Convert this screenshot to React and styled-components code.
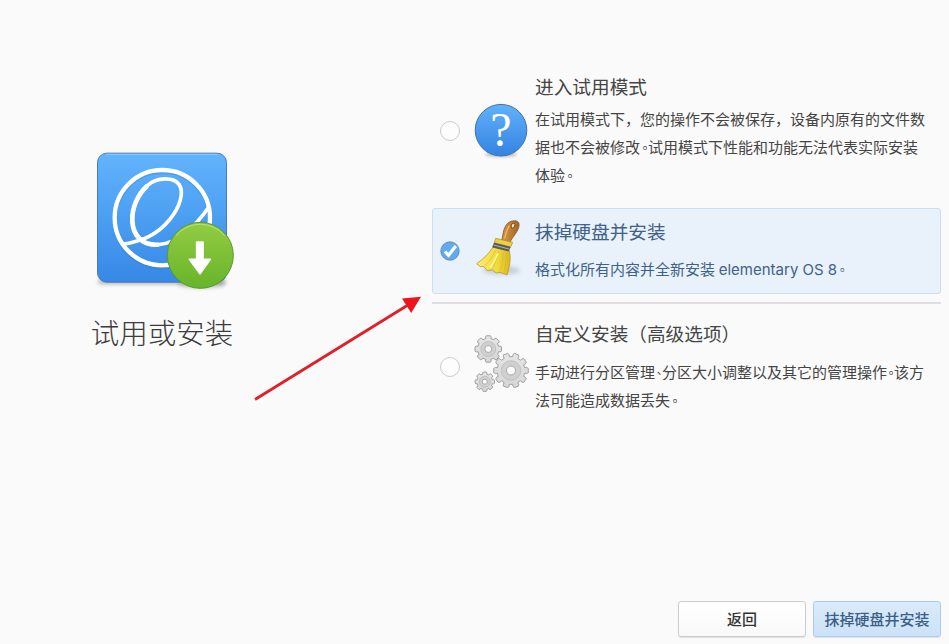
import React from "react";
import styled, { createGlobalStyle } from "styled-components";

const GlobalStyle = createGlobalStyle`
  * {
    box-sizing: border-box;
  }
  body {
    margin: 0;
    background: #fafafa;
    color: #454545;
    font-family: Inter, "Noto Sans CJK SC", sans-serif;
  }
`;

const Window = styled.div`
  position: relative;
  display: flex;
  flex-direction: column;
  width: 949px;
  height: 644px;
  overflow: hidden;
  background: #fafafa;
`;
const Content = styled.main`
  display: flex;
  flex: 1;
`;
const Intro = styled.section`
  display: flex;
  flex-direction: column;
  align-items: center;
  width: 324px;
  margin-right: 108px;
  padding-top: 140px;
`;
const Logo = styled.svg`
  width: 160px;
  height: 160px;
  margin-left: 6px;
`;
const Heading = styled.h1`
  margin: 12px 0 0;
  font-size: 28.5px;
  line-height: 44px;
  font-weight: 300;
  color: #3c3c3c;
`;
const Options = styled.section`
  display: flex;
  flex-direction: column;
  width: 509px;
  padding-top: 73px;
`;
const Option = styled.div`
  display: flex;
  align-items: center;
  height: ${({ $height }) => $height}px;
  margin-bottom: ${({ $gap }) => $gap || 0}px;
  padding-left: ${({ $selected }) => ($selected ? 7 : 8)}px;
  border: ${({ $selected }) => ($selected ? "1px solid #c9e0f5" : "none")};
  border-radius: 3px;
  background: ${({ $selected }) => ($selected ? "#e9f1fb" : "transparent")};
  color: ${({ $selected }) => ($selected ? "#3f6288" : "#454545")};
`;
const Radio = styled.span`
  flex: none;
  width: 20px;
  height: 20px;
  margin: 0 13px 2px 0;
  border: 1.5px solid #cbcbcb;
  border-radius: 50%;
  background: #fdfdfd;
`;
const Check = styled.svg`
  flex: none;
  width: 20px;
  height: 20px;
  margin-right: 13px;
`;
const Icon = styled.svg`
  flex: none;
  width: 56px;
  height: ${({ $height }) => $height}px;
  margin-right: 6px;
  overflow: visible;
`;
const Title = styled.h2`
  margin: 0 0 ${({ $gap }) => $gap}px;
  font-size: 18.67px;
  line-height: 28px;
  font-weight: 400;
`;
const Line = styled.p`
  margin: 0;
  font-size: 15px;
  line-height: 28px;
  white-space: nowrap;
`;
const Stop = styled.span`
  display: inline-block;
  width: ${({ $width }) => $width || 8}px;
  padding-left: ${({ $width }) => ($width === 7 ? 1 : 2)}px;
  font-family: "Noto Sans CJK TC", sans-serif;
  font-feature-settings: "halt";
  font-size: 12px;
  line-height: 1;
`;
const Latin = styled.span`
  margin-left: -0.5px;
`;
const Separator = styled.hr`
  width: 100%;
  height: 2px;
  margin: 0 0 17px;
  border: 0;
  background: #dedede;
`;
const Actions = styled.footer`
  display: flex;
  justify-content: flex-end;
  gap: 7px;
  padding: 0 8px 7px 0;
`;
const Button = styled.button`
  width: 128px;
  height: 36px;
  padding: 0 0 2px;
  border: 1px solid ${({ $primary }) => ($primary ? "#a9cdec" : "#cccccc")};
  border-radius: 3px;
  background: ${({ $primary }) =>
    $primary
      ? "linear-gradient(#d9eafb, #cde2f8)"
      : "linear-gradient(#ffffff, #f9f9f9)"};
  box-shadow: 0 1px 1px rgba(0, 0, 0, 0.1);
  color: ${({ $primary }) => ($primary ? "#3c5f86" : "#333333")};
  font-family: inherit;
  font-size: 15px;
  font-weight: 500;
`;
const Pointer = styled.svg`
  position: absolute;
  top: 280px;
  left: 240px;
  width: 200px;
  height: 130px;
  pointer-events: none;
`;

const AppLogo = () => (
  <Logo viewBox="0 0 480 480">
    <defs>
      <linearGradient id="tile" x1="0" y1="0" x2="0" y2="1">
        <stop offset="0" stopColor="#62b4fd" />
        <stop offset="1" stopColor="#3688e6" />
      </linearGradient>
      <linearGradient id="badge" x1="0" y1="0" x2="0" y2="1">
        <stop offset="0" stopColor="#93cc43" />
        <stop offset="1" stopColor="#67b42a" />
      </linearGradient>
      <filter id="soft" x="-20%" y="-100%" width="140%" height="300%">
        <feGaussianBlur stdDeviation="7" />
      </filter>
    </defs>
    <rect x="40" y="416" width="382" height="16" rx="8" fill="#000" opacity=".3" filter="url(#soft)" />
    <ellipse cx="350" cy="432" rx="72" ry="12" fill="#000" opacity=".22" filter="url(#soft)" />
    <rect x="37.500" y="39.500" width="387" height="387" rx="28" fill="url(#tile)" stroke="#4a79bd" strokeWidth="3" />
    <path d="M64 43H400" stroke="#8fcaff" strokeWidth="3" />
    <circle cx="232" cy="238" r="143" fill="none" stroke="#246cba" strokeOpacity=".25" strokeWidth="13" />
    <g fill="none" stroke="#fff">
      <circle cx="232" cy="233" r="143" strokeWidth="13" />
      <path
        d="M112 313C172 303 216 285 253 240C286 201 298 155 282 133C266 111 216 110 187 137C157 164 140 206 142 243C144 289 174 317 221 314C284 309 332 259 373 199"
        strokeWidth="11"
      />
      <path d="M187 137C157 164 140 206 142 243C144 289 174 317 221 314" strokeWidth="14" />
    </g>
    <circle cx="346" cy="346" r="99" fill="url(#badge)" stroke="#599a2d" strokeWidth="3" />
    <path d="M273 287A95 95 0 0 1 419 287" fill="none" stroke="#b9df85" strokeWidth="3" />
    <path
      d="M335 306H354V358H376L345 401L313 358H335Z"
      fill="#fff"
      stroke="#fff"
      strokeWidth="5"
      strokeLinejoin="round"
    />
  </Logo>
);

const QuestionIcon = () => (
  <Icon $height={61} viewBox="473 101 56 61">
    <defs>
      <linearGradient id="help" x1="0" y1="0" x2="0" y2="1">
        <stop offset="0" stopColor="#62b1fa" />
        <stop offset="1" stopColor="#3483e2" />
      </linearGradient>
      <filter id="helpShadow" x="-20%" y="-100%" width="140%" height="300%">
        <feGaussianBlur stdDeviation="1.500" />
      </filter>
    </defs>
    <ellipse cx="501" cy="153.500" rx="16" ry="2.500" fill="#000" opacity=".25" filter="url(#helpShadow)" />
    <circle cx="501" cy="129.200" r="25.800" fill="url(#help)" stroke="#4572ae" />
    <text
      x="501"
      y="144.600"
      textAnchor="middle"
      fontFamily="Liberation Serif"
      fontSize="48"
      fill="#fff"
    >
      ?
    </text>
  </Icon>
);

const BroomIcon = () => (
  <Icon $height={62} viewBox="144 60 168 186">
    <defs>
      <linearGradient id="handle" x1="0" x2="1">
        <stop offset="0" stopColor="#d99a45" />
        <stop offset="1" stopColor="#a7641f" />
      </linearGradient>
      <linearGradient id="straw" x1="0" x2="1">
        <stop offset="0" stopColor="#fbec7a" />
        <stop offset=".6" stopColor="#f2dc3c" />
        <stop offset="1" stopColor="#d9b722" />
      </linearGradient>
      <filter id="broomShadow" x="-20%" y="-50%" width="140%" height="200%">
        <feGaussianBlur stdDeviation="7" />
      </filter>
    </defs>
    <ellipse cx="230" cy="211" rx="56" ry="12" fill="#53606e" opacity=".25" filter="url(#broomShadow)" />
    <path
      d="M229 124C235 107 233 91 243 76C252 61 275 58 281 68C286 81 275 96 266 109C259 118 255 126 252 133Z"
      fill="url(#handle)"
      stroke="#8a5722"
      strokeWidth="2.500"
    />
    <path d="M239 115C243 100 246 88 253 77" fill="none" stroke="#ecb973" strokeWidth="4" />
    <ellipse cx="264" cy="77" rx="5" ry="8" transform="rotate(24 264 77)" fill="#f4e4ca" stroke="#704113" strokeWidth="2.500" />
    <path d="M212 115L263 127L256 143L207 131Z" fill="#ead044" stroke="#a98b26" strokeWidth="2" />
    <path
      d="M204 141C193 160 175 177 155 191L166 200L176 199L187 212L201 209L214 219L225 217L246 225C253 203 259 176 253 153Z"
      fill="url(#straw)"
      stroke="#b99b2b"
      strokeWidth="2.500"
      strokeLinejoin="round"
    />
    <path
      d="M211 151C202 173 190 187 178 198M221 153C215 178 209 194 202 207M235 156C234 180 230 200 224 214M244 160C244 181 241 200 237 216"
      fill="none"
      stroke="#cfb02e"
      strokeWidth="1.500"
    />
    <path d="M219 160C210 182 203 192 195 203" stroke="#fff6a1" strokeWidth="5" fill="none" />
    <path d="M208 129L255 141L251 153L203 141Z" fill="#5b6068" stroke="#42464b" strokeWidth="2" />
    <path d="M206 135L252 147" stroke="#b7b19b" strokeWidth="3" />
  </Icon>
);

const gearPath = (cx, cy, r, teeth, turn) => {
  const points = [];
  const step = (Math.PI * 2) / teeth;
  for (let i = 0; i < teeth; i++) {
    [
      [-0.31, 0.8],
      [-0.31, 0.91],
      [-0.2, 1],
      [0.2, 1],
      [0.31, 0.91],
      [0.31, 0.8],
    ].forEach(([offset, k]) => {
      const a = (i + offset + turn) * step - Math.PI / 2;
      points.push(`${(cx + Math.cos(a) * r * k).toFixed(2)} ${(cy + Math.sin(a) * r * k).toFixed(2)}`);
    });
  }
  return `M${points.join("L")}Z`;
};

const Gear = ({ cx, cy, r, teeth = 8, turn = 0 }) => (
  <g stroke="#a0a0a0" strokeLinejoin="round">
    <path d={gearPath(cx, cy, r, teeth, turn)} fill="url(#metal)" />
    <circle cx={cx} cy={cy} r={r * 0.56} fill="#d0d0d0" stroke="#bdbdbd" strokeWidth=".9" />
    <circle cx={cx} cy={cy} r={r * 0.26} fill="#fafafa" stroke="#a8a8a8" />
  </g>
);

const GearsIcon = () => (
  <Icon $height={60} viewBox="473 338 56 60">
    <defs>
      <linearGradient id="metal" x1="0" y1="0" x2="0" y2="1">
        <stop offset="0" stopColor="#e6e6e6" />
        <stop offset="1" stopColor="#d6d6d6" />
      </linearGradient>
    </defs>
    <Gear cx={488.3} cy={349} r={13.4} />
    <Gear cx={484.8} cy={381.7} r={9.8} />
    <Gear cx={511} cy={370.5} r={17.4} teeth={10} turn={0.5} />
  </Icon>
);

const App = () => {
  return (
    <>
      <GlobalStyle />
      <Window lang="zh-CN">
        <Content>
          <Intro>
            <AppLogo />
            <Heading>试用或安装</Heading>
          </Intro>
          <Options>
            <Option $height={118} $gap={17}>
              <Radio />
              <QuestionIcon />
              <div>
                <Title $gap={4}>进入试用模式</Title>
                <Line>在试用模式下，您的操作不会被保存，设备内原有的文件数</Line>
                <Line>
                  据也不会被修改<Stop lang="zh-TW">。</Stop>试用模式下性能和功能无法代表实际安装
                </Line>
                <Line>
                  体验<Stop lang="zh-TW">。</Stop>
                </Line>
              </div>
            </Option>
            <Option $selected $height={86} $gap={8}>
              <Check viewBox="0 0 20 20">
                <circle cx="10" cy="10" r="9.200" fill="#62aaf0" stroke="#5284b9" strokeWidth=".8" />
                <path d="M5 10.500L8.500 14.300L15.800 5" fill="none" stroke="#fff" strokeWidth="3.200" />
              </Check>
              <BroomIcon />
              <div>
                <Title $gap={9}>抹掉硬盘并安装</Title>
                <Line>
                  格式化所有内容并全新安装<Latin> elementary OS 8</Latin>
                  <Stop lang="zh-TW">。</Stop>
                </Line>
              </div>
            </Option>
            <Separator />
            <Option $height={94}>
              <Radio />
              <GearsIcon />
              <div>
                <Title $gap={10}>自定义安装（高级选项）</Title>
                <Line>
                  手动进行分区管理<Stop lang="zh-TW" $width={7}>、</Stop>
                  分区大小调整以及其它的管理操作<Stop lang="zh-TW" $width={7}>。</Stop>该方
                </Line>
                <Line>
                  法可能造成数据丢失<Stop lang="zh-TW">。</Stop>
                </Line>
              </div>
            </Option>
          </Options>
        </Content>
        <Actions>
          <Button>返回</Button>
          <Button $primary>抹掉硬盘并安装</Button>
        </Actions>
        <Pointer viewBox="240 280 200 130">
          <path d="M255 399.500L408 305" stroke="#df202b" strokeWidth="2.800" />
          <path d="M421 296.800L402 298.500L411.200 313Z" fill="#ee141d" />
        </Pointer>
      </Window>
    </>
  );
};

export default App;
